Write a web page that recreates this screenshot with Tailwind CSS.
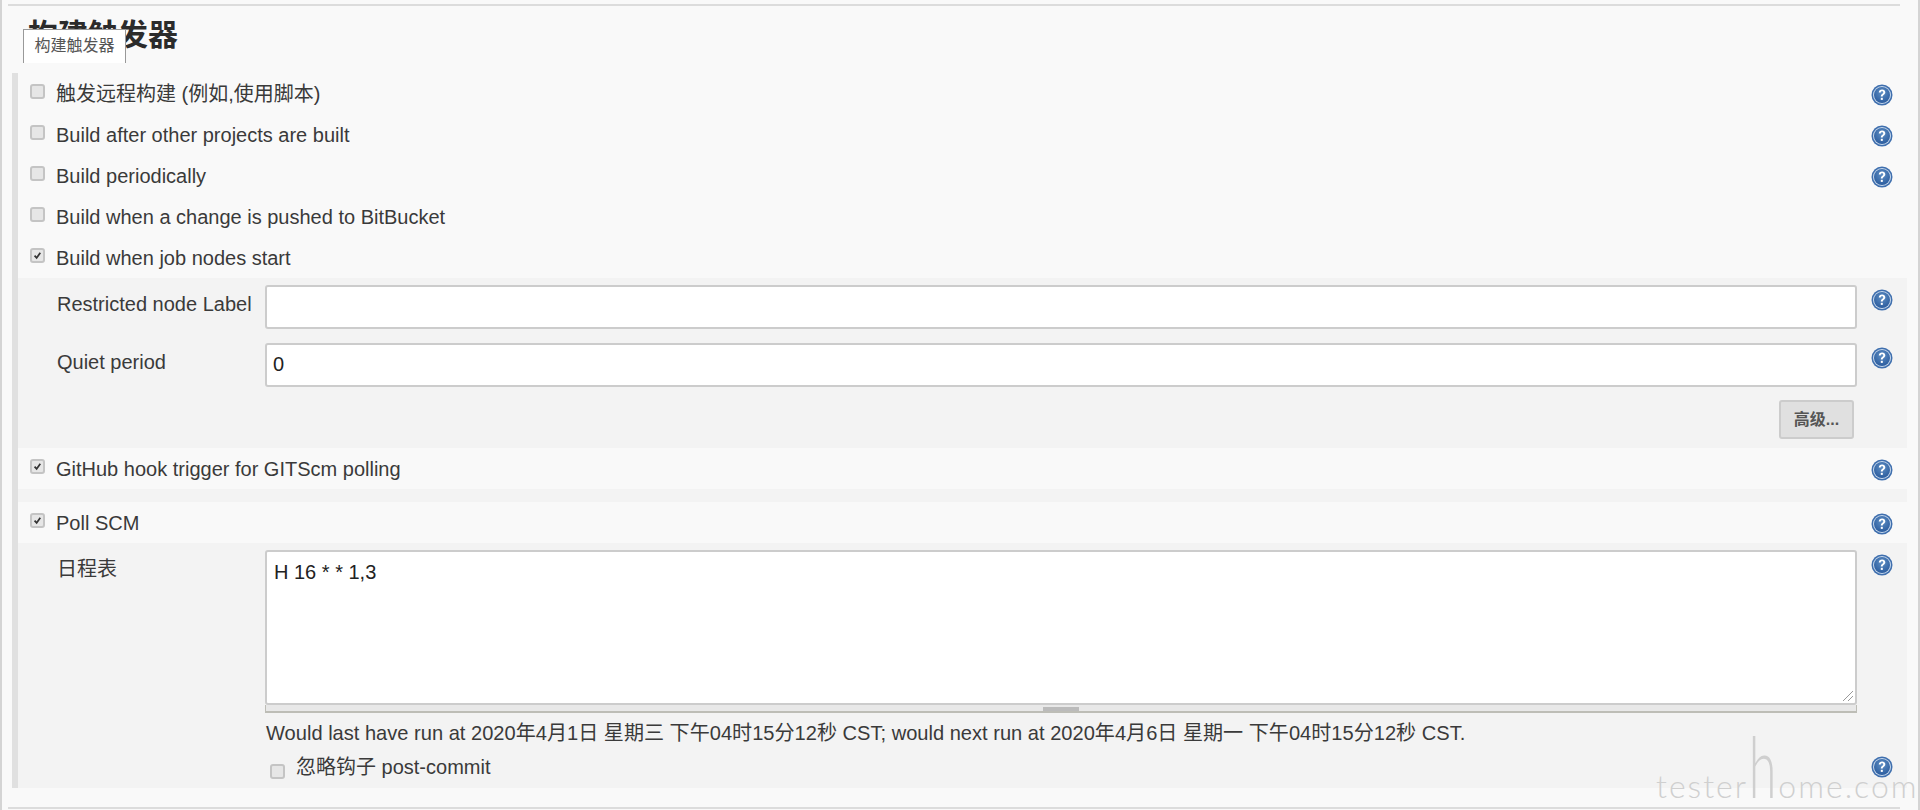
<!DOCTYPE html>
<html lang="zh-CN">
<head>
    <meta charset="UTF-8">
    <title>构建触发器</title>
    <script src="https://cdn.jsdelivr.net/npm/@tailwindcss/browser@4"></script>
</head>
<body class="bg-[#f9f9f9] text-[#3a3a3a] [font-family:'Liberation_Sans','Noto_Sans_CJK_SC',sans-serif] text-[20px]">

    <!-- shared icons -->
    <svg class="absolute w-0 h-0">
        <defs>
            <radialGradient id="help-fill" cx="50%" cy="35%" r="65%">
                <stop offset="0" stop-color="#5f8fc4"/>
                <stop offset="1" stop-color="#2b5c9e"/>
            </radialGradient>
        </defs>
        <symbol id="help" viewBox="0 0 22 22">
            <circle cx="11" cy="11" r="10.5" fill="#3f6fae"/>
            <circle cx="11" cy="11" r="9" fill="#c9d9ec"/>
            <circle cx="11" cy="11" r="8" fill="url(#help-fill)"/>
            <path d="M7.8 8.6c0-2 1.4-3.1 3.3-3.1s3.2 1.1 3.2 2.8c0 1.4-.8 2-1.7 2.7-.6.4-.9.8-.9 1.6h-1.9c0-1.4.4-2 1.3-2.7.7-.5 1.2-.9 1.2-1.5 0-.7-.5-1.2-1.2-1.2-.8 0-1.3.5-1.4 1.4z" fill="#fff"/>
            <rect x="9.8" y="13.8" width="2" height="2.1" fill="#fff"/>
        </symbol>
        <symbol id="tick" viewBox="0 0 15 15">
            <path d="M3.5 7.8l2.8 3 5-7" fill="none" stroke="#333" stroke-width="2.4"/>
        </symbol>
    </svg>

    <div class="relative w-[1920px] h-[810px] overflow-hidden border-l-2 border-r-2 border-[#d4d4d4]">
        <div class="ml-[6px] mr-[18px] mt-[4px] h-[2px] bg-[#dcdcdc]"></div>

        <h2 class="ml-[26px] mt-[11px] h-[56px] text-[30px] leading-[36px] font-bold text-[#2b2b2b]">构建触发器</h2>
        <div class="absolute left-[21px] top-[29px] w-[103px] h-[34px] bg-white border-t border-x border-[#999] text-[16px] leading-[32px] text-center text-[#555]">构建触发器</div>

        <div class="ml-[10px] mr-[11px] border-l-[6px] border-[#e0e0e0]">
            <div class="flex items-center h-[41px] pl-[12px] pr-[14px]">
                <span class="w-[15px] h-[15px] -mt-[5px] rounded-[3px] bg-[#e6e6e6] border-2 border-[#c4c4c4]"></span>
                <span class="ml-[11px]">触发远程构建 (例如,使用脚本)</span>
                <svg class="ml-auto mt-[2px] w-[22px] h-[22px]"><use href="#help"/></svg>
            </div>
            <div class="flex items-center h-[41px] pl-[12px] pr-[14px]">
                <span class="w-[15px] h-[15px] -mt-[5px] rounded-[3px] bg-[#e6e6e6] border-2 border-[#c4c4c4]"></span>
                <span class="ml-[11px]">Build after other projects are built</span>
                <svg class="ml-auto mt-[2px] w-[22px] h-[22px]"><use href="#help"/></svg>
            </div>
            <div class="flex items-center h-[41px] pl-[12px] pr-[14px]">
                <span class="w-[15px] h-[15px] -mt-[5px] rounded-[3px] bg-[#e6e6e6] border-2 border-[#c4c4c4]"></span>
                <span class="ml-[11px]">Build periodically</span>
                <svg class="ml-auto mt-[2px] w-[22px] h-[22px]"><use href="#help"/></svg>
            </div>
            <div class="flex items-center h-[41px] pl-[12px] pr-[14px]">
                <span class="w-[15px] h-[15px] -mt-[5px] rounded-[3px] bg-[#e6e6e6] border-2 border-[#c4c4c4]"></span>
                <span class="ml-[11px]">Build when a change is pushed to BitBucket</span>
            </div>
            <div class="flex items-center h-[41px] pl-[12px] pr-[14px]">
                <span class="w-[15px] h-[15px] -mt-[5px] rounded-[3px] bg-[#e6e6e6] border-2 border-[#c4c4c4]"><svg class="w-[11px] h-[11px]"><use href="#tick"/></svg></span>
                <span class="ml-[11px]">Build when job nodes start</span>
            </div>

            <!-- job nodes options -->
            <div class="bg-[#f3f3f3] h-[170px] pt-[7px] pl-[39px] pr-[14px]">
                <div class="flex h-[44px]">
                    <label class="w-[208px] pt-[4px]">Restricted node Label</label>
                    <div class="w-[1592px] h-[44px] bg-white border-2 border-[#ccc] rounded-[3px]"></div>
                    <svg class="ml-[14px] mt-[4px] w-[22px] h-[22px]"><use href="#help"/></svg>
                </div>
                <div class="flex h-[44px] mt-[14px]">
                    <label class="w-[208px] pt-[4px]">Quiet period</label>
                    <div class="w-[1592px] h-[44px] bg-white border-2 border-[#ccc] rounded-[3px] pl-[6px] leading-[38px] text-[#222]">0</div>
                    <svg class="ml-[14px] mt-[4px] w-[22px] h-[22px]"><use href="#help"/></svg>
                </div>
                <div class="flex justify-end mt-[13px] pr-[39px]">
                    <button class="w-[75px] h-[39px] bg-[#e0e0e0] border-2 border-[#ccc] rounded-[3px] text-[16px] font-bold text-[#555]">高级...</button>
                </div>
            </div>

            <div class="flex items-center h-[41px] pl-[12px] pr-[14px]">
                <span class="w-[15px] h-[15px] -mt-[5px] rounded-[3px] bg-[#e6e6e6] border-2 border-[#c4c4c4]"><svg class="w-[11px] h-[11px]"><use href="#tick"/></svg></span>
                <span class="ml-[11px]">GitHub hook trigger for GITScm polling</span>
                <svg class="ml-auto mt-[2px] w-[22px] h-[22px]"><use href="#help"/></svg>
            </div>
            <div class="h-[13px] bg-[#f3f3f3]"></div>
            <div class="flex items-center h-[41px] pl-[12px] pr-[14px]">
                <span class="w-[15px] h-[15px] -mt-[5px] rounded-[3px] bg-[#e6e6e6] border-2 border-[#c4c4c4]"><svg class="w-[11px] h-[11px]"><use href="#tick"/></svg></span>
                <span class="ml-[11px]">Poll SCM</span>
                <svg class="ml-auto mt-[2px] w-[22px] h-[22px]"><use href="#help"/></svg>
            </div>

            <!-- poll scm options -->
            <div class="bg-[#f3f3f3] h-[245px] pt-[7px] pl-[39px] pr-[14px]">
                <div class="flex">
                    <label class="w-[208px] pt-[4px]">日程表</label>
                    <div class="w-[1592px]">
                        <div class="relative h-[155px] bg-white border-2 border-[#ccc] rounded-[3px] pl-[7px] pt-[8px] leading-[24px] text-[#222]">
                            H 16 * * 1,3
                            <svg class="absolute right-[1px] bottom-[1px] w-[12px] h-[12px]" viewBox="0 0 12 12"><path d="M1 11L11 1M6 11l5-5" stroke="#999" stroke-width="1"/></svg>
                        </div>
                        <div class="flex justify-center h-[8px] bg-[#e8e8e8] border-x border-b-2 border-[#bdbdb6]">
                            <span class="w-[36px] h-[4px] mt-[2px] bg-[#bbb]"></span>
                        </div>
                    </div>
                    <svg class="ml-[14px] mt-[4px] w-[22px] h-[22px]"><use href="#help"/></svg>
                </div>
                <p class="ml-[209px] mt-[9px] leading-[22px] text-[20.08px]">Would last have run at 2020年4月1日 星期三 下午04时15分12秒 CST; would next run at 2020年4月6日 星期一 下午04时15分12秒 CST.</p>
                <div class="flex items-center ml-[213px] mt-[12px] h-[22px]">
                    <span class="w-[15px] h-[15px] mt-[9px] rounded-[3px] bg-[#e6e6e6] border-2 border-[#c4c4c4]"></span>
                    <span class="ml-[11px]">忽略钩子 post-commit</span>
                    <svg class="ml-auto w-[22px] h-[22px]"><use href="#help"/></svg>
                </div>
            </div>
        </div>

        <div class="ml-[6px] mr-[18px] mt-[19px] h-[2px] bg-[#dcdcdc]"></div>

        <!-- watermark -->
        <div class="absolute left-[1654px] top-[744px] text-[32px] leading-[44px] tracking-[2px] text-[#cfcfcf] [font-family:'Lato',sans-serif] font-light whitespace-nowrap pointer-events-none">tester<span class="inline-block text-[84px] leading-[44px] scale-x-[0.6] -mx-[9px]">h</span>ome.com</div>
    </div>
</body>
</html>
